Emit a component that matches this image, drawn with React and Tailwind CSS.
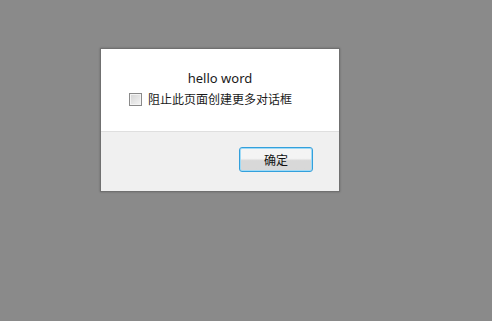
import React from 'react'

const App = () => {
  return (
    <div
      className="w-[492px] h-[321px] bg-[#8a8a8a] pl-[100px] pt-[48px]"
      style={{ fontFamily: '"Noto Sans", "Noto Sans CJK SC", sans-serif' }}
    >
      {/* Dialog */}
      <div className="w-[240px] border border-[#707070] bg-white shadow-[0_0_2px_rgba(0,0,0,0.25)]">
        <div className="h-[82px] pt-[21px]">
          <div className="text-center text-[13px] leading-[16px] text-[#1a1a1a]">hello word</div>
          <label className="mt-[5px] pl-[28px] flex items-center text-[12px] leading-[16px] text-[#1a1a1a]">
            <span className="w-[13px] h-[13px] border border-[#8a8a8a] bg-gradient-to-br from-[#d4d4d4] to-[#f5f5f5] shadow-[inset_0_0_0_1px_#f4f4f4]" />
            <span className="ml-[6px]" style={{ fontFamily: '"Noto Sans CJK SC", sans-serif' }}>
              阻止此页面创建更多对话框
            </span>
          </label>
        </div>

        {/* Footer */}
        <div className="h-[60px] border-t border-[#dfdfdf] bg-[#f0f0f0] flex justify-end pt-[15px] pr-[26px]">
          <button
            className="w-[74px] h-[25px] rounded-[3px] border border-[#33a0dc] shadow-[inset_0_0_0_1px_#9fdaf6] bg-gradient-to-b from-[#f4f4f4] from-45% to-[#d8d8d8] to-55% text-[12px] leading-none text-[#111]"
            style={{ fontFamily: '"Noto Sans CJK SC", sans-serif' }}
          >
            确定
          </button>
        </div>
      </div>
    </div>
  )
}

export default App
